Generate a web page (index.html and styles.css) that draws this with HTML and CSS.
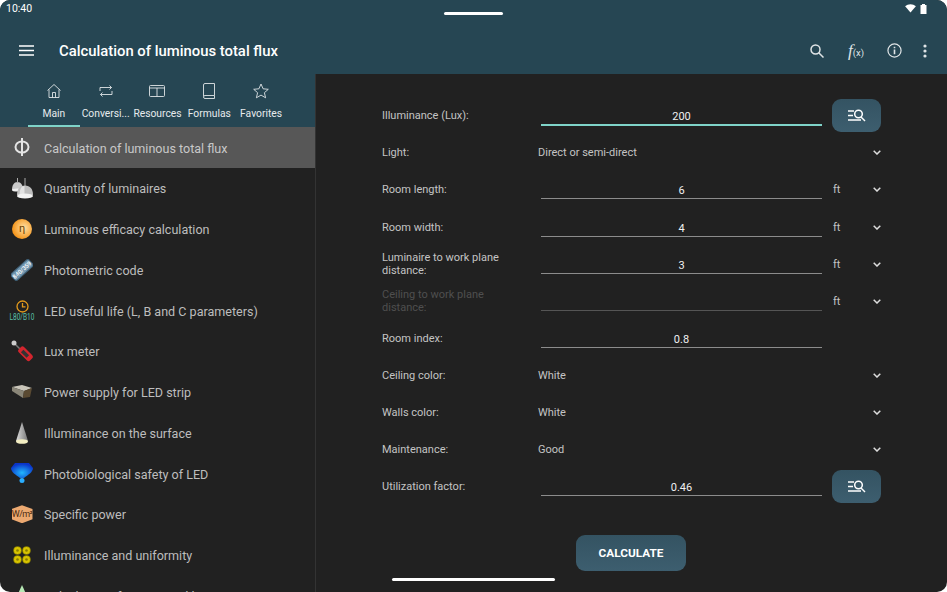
FILE: index.html
```html
<!DOCTYPE html>
<html lang="en">
<head>
  <meta charset="UTF-8">
  <title>Calculation of luminous total flux</title>
  <link rel="stylesheet" href="styles.css">
</head>
<body>
  <div class="screen">
    <!-- Status bar and toolbar -->
    <header class="appbar">
      <div class="status">
        <span>10:40</span>
        <span class="status-icons">
          <svg width="11" height="9" viewBox="0 0 12 10"><path d="M0 2.500C3.200-.6 8.800-.6 12 2.500L6 9.500z" fill="#fff"/></svg>
          <svg width="7" height="10" viewBox="0 0 7 10"><path d="M2 0h3v1h1.500v9H.5V1H2z" fill="#fff"/></svg>
        </span>
      </div>
      <div class="toolbar">
        <svg class="menu" width="15" height="11" viewBox="0 0 15 11"><path d="M0 1h15M0 5.500h15M0 10h15" stroke="#fff" stroke-width="1.400"/></svg>
        <h1>Calculation of luminous total flux</h1>
        <div class="actions">
          <svg class="act-search" width="14" height="14" viewBox="0 0 14 14" fill="none" stroke="#dfe4e6" stroke-width="1.500"><circle cx="5.500" cy="5.500" r="4.500"/><path d="M8.700 8.700l4.800 4.800"/></svg>
          <span class="fx"><i>f</i><small>(x)</small></span>
          <svg class="act-info" width="15" height="15" viewBox="0 0 16 16" fill="none" stroke="#dfe4e6" stroke-width="1.300"><circle cx="8" cy="8" r="7"/><path d="M8 7v5" stroke-width="1.700"/><path d="M8 4v1.700" stroke-width="1.700"/></svg>
          <svg class="act-more" width="4" height="14" viewBox="0 0 4 14" fill="#dfe4e6"><circle cx="2" cy="2" r="1.600"/><circle cx="2" cy="7" r="1.600"/><circle cx="2" cy="12" r="1.600"/></svg>
        </div>
      </div>
    </header>

    <div class="body">
      <aside class="sidebar">
        <nav class="tabs">
          <a class="tab active">
            <svg width="16" height="16" viewBox="0 0 16 16" fill="none" stroke="#dfe4e6" stroke-width=".9"><path d="M1.500 7.500L8 1.500l6.500 6M3 6.500v8h10v-8M6.500 14.500v-5h3v5"/></svg>
            <span>Main</span>
          </a>
          <a class="tab">
            <svg width="16" height="16" viewBox="0 0 16 16" fill="none" stroke="#dfe4e6" stroke-width=".9"><path d="M2 8V4.500h11.500M11.500 2.500l2 2-2 2M14 8v3.500H2.500M4.500 9.500l-2 2 2 2"/></svg>
            <span>Conversi...</span>
          </a>
          <a class="tab">
            <svg width="16" height="16" viewBox="0 0 16 16" fill="none" stroke="#dfe4e6" stroke-width=".9"><rect x="0.500" y="2.500" width="15" height="11" rx="1"/><path d="M8 5v8.500M0.500 5h15"/></svg>
            <span>Resources</span>
          </a>
          <a class="tab">
            <svg width="16" height="16" viewBox="0 0 16 16" fill="none" stroke="#dfe4e6" stroke-width=".9"><path d="M2.500 13V2a1.500 1.500 0 0 1 1.500-1.500h9.500v12H4a1.300 1.300 0 0 0 0 3h9.500v-3"/></svg>
            <span>Formulas</span>
          </a>
          <a class="tab">
            <svg width="16" height="16" viewBox="0 0 16 16" fill="none" stroke="#dfe4e6" stroke-width=".9"><path d="M8 1l2.100 4.800 5.200.5-3.900 3.400 1.200 5.100L8 12.100l-4.600 2.700 1.200-5.100L.7 6.300l5.200-.5z"/></svg>
            <span>Favorites</span>
          </a>
        </nav>
        <ul class="calc-list">
          <li class="selected">
            <span class="ico"><svg width="16" height="18" viewBox="0 0 16 18" fill="none" stroke="#e4e4e4" stroke-width="2"><ellipse cx="8" cy="9" rx="6.500" ry="5.500"/><path d="M8 0v18"/></svg></span>
            <span>Calculation of luminous total flux</span>
          </li>
          <li>
            <span class="ico"><svg width="22" height="21" viewBox="0 0 22 21"><path d="M1 12C1 7 3 4 6.500 4s5.500 3 5.500 8z" fill="#c9c9c9"/><ellipse cx="6.500" cy="12" rx="5.500" ry="1.500" fill="#eee"/><path d="M6 0h1v5H6zM13.500 0h1v8h-1z" fill="#aaa"/><path d="M6 17C6 11 9 7.500 14 7.500S22 11 22 17z" fill="#bdbdbd"/><path d="M11 8.500C9 11 8.500 14 8.500 17h5V8z" fill="#e2e2e2"/><ellipse cx="14" cy="18" rx="8" ry="2.500" fill="#f2f2f2"/></svg></span>
            <span>Quantity of luminaires</span>
          </li>
          <li>
            <span class="ico"><span class="eta">η</span></span>
            <span>Luminous efficacy calculation</span>
          </li>
          <li>
            <span class="ico"><svg width="22" height="22" viewBox="0 0 22 22"><rect x="-1" y="6.500" width="24" height="9" rx="2.500" transform="rotate(-42 11 11)" fill="#6f94ad" stroke="#3d5c72"/><text x="11" y="13" text-anchor="middle" transform="rotate(-42 11 11)" font-size="6" font-weight="700" fill="#f2f6f8">840/359</text></svg></span>
            <span>Photometric code</span>
          </li>
          <li>
            <span class="ico ico-led">
              <svg width="13" height="13" viewBox="0 0 13 13" fill="none" stroke="#e39a1c" stroke-width="1.300"><circle cx="6.500" cy="6.500" r="5.500"/><path d="M6.500 3v3.800h3"/></svg>
              <span>L80/B10</span>
            </span>
            <span>LED useful life (L, B and C parameters)</span>
          </li>
          <li>
            <span class="ico"><svg width="22" height="22" viewBox="0 0 22 22"><path d="M3 3l6 6" stroke="#777" stroke-width="1.500"/><circle cx="3" cy="3" r="2.500" fill="#ccc"/><rect x="6.500" y="10" width="16" height="7.500" rx="2.500" transform="rotate(45 14.500 13.750)" fill="#d3252e"/><rect x="10" y="12" width="8" height="3.500" transform="rotate(45 14 13.750)" fill="#333"/></svg></span>
            <span>Lux meter</span>
          </li>
          <li>
            <span class="ico"><svg width="20" height="13" viewBox="0 0 20 13"><path d="M0 2L10 0l10 3-8 3z" fill="#c9c5b9"/><path d="M0 2l12 4-1 7L0 6z" fill="#8a8678"/><path d="M12 6l8-3-2 9-7 1z" fill="#5a4a32"/></svg></span>
            <span>Power supply for LED strip</span>
          </li>
          <li>
            <span class="ico"><svg width="14" height="22" viewBox="0 0 14 22"><defs><linearGradient id="cone" x1="0" x2="1" y1="0" y2="0"><stop offset="0" stop-color="#ddd"/><stop offset="1" stop-color="#777"/></linearGradient></defs><path d="M7 0L13 19H1z" fill="url(#cone)"/><ellipse cx="7" cy="19.500" rx="6" ry="2.300" fill="#f3eec2"/></svg></span>
            <span>Illuminance on the surface</span>
          </li>
          <li>
            <span class="ico"><svg width="22" height="20" viewBox="0 0 22 20"><defs><radialGradient id="blue" cx=".5" cy=".65" r=".6"><stop offset="0" stop-color="#21b8ff"/><stop offset="1" stop-color="#0a34c8"/></radialGradient></defs><path d="M4 0h14l4 5c0 4-5 7-9 10H9C5 12 0 9 0 5z" fill="url(#blue)"/><circle cx="11" cy="17.500" r="2.500" fill="#2aaeff"/></svg></span>
            <span>Photobiological safety of LED</span>
          </li>
          <li>
            <span class="ico"><span class="wm">W/m²</span></span>
            <span>Specific power</span>
          </li>
          <li>
            <span class="ico"><svg width="18" height="18" viewBox="0 0 18 18" fill="#d8c400" stroke="#6b6200" stroke-width=".5"><circle cx="4.500" cy="4.500" r="4"/><circle cx="13.500" cy="4.500" r="4"/><circle cx="4.500" cy="13.500" r="4"/><circle cx="13.500" cy="13.500" r="4"/><g fill="#8d8000" stroke="none"><circle cx="4.500" cy="4.500" r="1.300"/><circle cx="13.500" cy="4.500" r="1.300"/><circle cx="4.500" cy="13.500" r="1.300"/><circle cx="13.500" cy="13.500" r="1.300"/></g></svg></span>
            <span>Illuminance and uniformity</span>
          </li>
          <li>
            <span class="ico"><svg width="22" height="22" viewBox="0 0 22 22"><path d="M11 0l9 20H2z" fill="#b6e8b4"/></svg></span>
            <span>Calculation of spaces and luminaires</span>
          </li>
        </ul>
      </aside>

      <main class="content">
        <form class="calc-form">
          <label>Illuminance (Lux):</label>
          <div class="input focus">200</div>
          <button type="button" class="list-btn"><svg width="18" height="13" viewBox="0 0 18 13" fill="none" stroke="#fff" stroke-width="1.500"><path d="M0 2h6M0 6.500h5M0 11h13"/><circle cx="10.500" cy="5" r="3.800"/><path d="M13 8l4 4"/></svg></button>

          <label>Light:</label>
          <div class="select">Direct or semi-direct<svg class="chev" width="8" height="5" viewBox="0 0 8 5" fill="none" stroke="#ddd" stroke-width="1.500"><path d="M.7.7L4 4l3.300-3.300"/></svg></div>

          <label>Room length:</label>
          <div class="input">6</div>
          <div class="unit">ft<svg class="chev" width="8" height="5" viewBox="0 0 8 5" fill="none" stroke="#ddd" stroke-width="1.500"><path d="M.7.7L4 4l3.300-3.300"/></svg></div>

          <label>Room width:</label>
          <div class="input">4</div>
          <div class="unit">ft<svg class="chev" width="8" height="5" viewBox="0 0 8 5" fill="none" stroke="#ddd" stroke-width="1.500"><path d="M.7.7L4 4l3.300-3.300"/></svg></div>

          <label>Luminaire to work plane distance:</label>
          <div class="input">3</div>
          <div class="unit">ft<svg class="chev" width="8" height="5" viewBox="0 0 8 5" fill="none" stroke="#ddd" stroke-width="1.500"><path d="M.7.7L4 4l3.300-3.300"/></svg></div>

          <label class="off">Ceiling to work plane distance:</label>
          <div class="input off"></div>
          <div class="unit">ft<svg class="chev" width="8" height="5" viewBox="0 0 8 5" fill="none" stroke="#ddd" stroke-width="1.500"><path d="M.7.7L4 4l3.300-3.300"/></svg></div>

          <label>Room index:</label>
          <div class="input">0.8</div>
          <span></span>

          <label>Ceiling color:</label>
          <div class="select">White<svg class="chev" width="8" height="5" viewBox="0 0 8 5" fill="none" stroke="#ddd" stroke-width="1.500"><path d="M.7.7L4 4l3.300-3.300"/></svg></div>

          <label>Walls color:</label>
          <div class="select">White<svg class="chev" width="8" height="5" viewBox="0 0 8 5" fill="none" stroke="#ddd" stroke-width="1.500"><path d="M.7.7L4 4l3.300-3.300"/></svg></div>

          <label>Maintenance:</label>
          <div class="select">Good<svg class="chev" width="8" height="5" viewBox="0 0 8 5" fill="none" stroke="#ddd" stroke-width="1.500"><path d="M.7.7L4 4l3.300-3.300"/></svg></div>

          <label>Utilization factor:</label>
          <div class="input">0.46</div>
          <button type="button" class="list-btn"><svg width="18" height="13" viewBox="0 0 18 13" fill="none" stroke="#fff" stroke-width="1.500"><path d="M0 2h6M0 6.500h5M0 11h13"/><circle cx="10.500" cy="5" r="3.800"/><path d="M13 8l4 4"/></svg></button>
        </form>
        <button type="button" class="calc-btn">CALCULATE</button>
      </main>
    </div>

    <!-- System gesture pills -->
    <div class="pill pill-top"></div>
    <div class="pill pill-bottom"></div>
  </div>
</body>
</html>
```

FILE: styles.css
```css
/* Tablet screen */
body {
  margin: 0;
  background: #fff;
}

.screen {
  position: relative;
  width: 947px;
  height: 592px;
  overflow: hidden;
  border-radius: 10px;
  background: #212121;
  font-family: Roboto, "Liberation Sans", sans-serif;
  color: #e0e0e0;
  display: flex;
  flex-direction: column;
}

/* Top bars */
.appbar {
  height: 74px;
  flex: none;
  background: #264653;
  color: #fff;
}

.status {
  height: 17px;
  padding: 0 20px 0 6px;
  display: flex;
  justify-content: space-between;
  align-items: center;
  font-size: 10.500px;
}

.status-icons {
  display: flex;
  gap: 4px;
  align-items: center;
}

.toolbar {
  height: 47px;
  display: flex;
  align-items: center;
  padding: 10px 20px 0 19px;
}

.toolbar h1 {
  margin: 0 0 0 25px;
  font-size: 14.850px;
  font-weight: 500;
  flex: 1;
}

.actions {
  display: flex;
  align-items: center;
}

.act-search { margin-right: 24px; }
.act-info { margin-right: 21px; }

.fx {
  width: 17px;
  margin-right: 22px;
  color: #dfe4e6;
  font-family: "Liberation Serif", serif;
  font-size: 17px;
  white-space: nowrap;
}

.fx small {
  font-family: Roboto, sans-serif;
  font-size: 9.500px;
}

/* Sidebar */
.body {
  flex: 1;
  min-height: 0;
  display: flex;
}

.sidebar {
  width: 315px;
  flex: none;
  border-right: 1px solid #333;
  display: flex;
  flex-direction: column;
}

.tabs {
  height: 53px;
  flex: none;
  padding-left: 28px;
  padding-right: 28px;
  background: #264653;
  display: flex;
  justify-content: space-between;
}

.tab {
  width: 52px;
  box-sizing: border-box;
  padding-top: 9px;
  display: flex;
  flex-direction: column;
  align-items: center;
  gap: 8px;
  font-size: 10.300px;
  white-space: nowrap;
  color: #e6ebed;
  border-bottom: 2px solid transparent;
}

.tab.active {
  border-bottom-color: #7fd3c8;
}

.calc-list {
  margin: 0;
  padding: 0;
  list-style: none;
}

.calc-list li {
  height: 40.750px;
  display: flex;
  align-items: center;
  font-size: 12.550px;
  color: #bdbdbd;
  white-space: nowrap;
}

.calc-list li > span:last-child {
  padding-top: 1.500px;
}

.calc-list li.selected {
  background: #575757;
  color: #c8c8c8;
}

.ico {
  width: 44px;
  flex: none;
  display: flex;
  flex-direction: column;
  align-items: center;
  justify-content: center;
}

.eta {
  width: 20px;
  height: 20px;
  border-radius: 50%;
  background: radial-gradient(circle at 60% 45%, #ffe2a8, #f5961c 70%);
  color: #6b4300;
  font-size: 11px;
  line-height: 20px;
  text-align: center;
}

.ico-led span {
  font-size: 6.500px;
  line-height: 8px;
  color: #5cc0a8;
  transform: scaleY(1.3);
}

.wm {
  width: 21px;
  height: 18px;
  background: #eca971;
  color: #4a2a10;
  font-size: 9px;
  letter-spacing: -.6px;
  line-height: 18px;
  text-align: center;
  clip-path: polygon(50% 0, 100% 22%, 100% 78%, 50% 100%, 0 78%, 0 22%);
}

/* Form */
.content {
  flex: 1;
  padding: 23.200px 66px 0;
  display: flex;
  flex-direction: column;
  align-items: center;
}

.calc-form {
  width: 100%;
  display: grid;
  grid-template-columns: 156px 295px 48px;
  grid-auto-rows: 37.100px;
  align-items: center;
  font-size: 11px;
}

.calc-form label {
  line-height: 13px;
  color: #c4c4c4;
  padding-right: 8px;
}

.calc-form label.off {
  color: #4f4f4f;
}

.input {
  width: 281px;
  margin-left: 3px;
  height: 18px;
  line-height: 21px;
  text-align: center;
  color: #f0f0f0;
  border-bottom: 1.500px solid #8c8c8c;
}

.input.focus {
  border-bottom: 2px solid #7fd3c8;
}

.input.off {
  border-bottom-color: #555;
}

.select {
  grid-column: 2 / 4;
  display: flex;
  justify-content: space-between;
  align-items: center;
  color: #c4c4c4;
}

.unit {
  display: flex;
  justify-content: space-between;
  align-items: center;
  color: #c4c4c4;
}

.list-btn {
  width: 49px;
  height: 33px;
  margin-left: -1px;
  padding: 0;
  border: 0;
  border-radius: 9px;
  background: linear-gradient(#345362, #3d5e6f);
  display: flex;
  align-items: center;
  justify-content: center;
}

.calc-btn {
  width: 110px;
  height: 36px;
  margin: 29.500px 1px 0 0;
  border: 0;
  border-radius: 9px;
  background: linear-gradient(#345362, #3d5e6f);
  color: #fff;
  font-family: Roboto, sans-serif;
  font-size: 11.800px;
  font-weight: 700;
}

/* System pills */
.pill {
  position: absolute;
  background: #fff;
  border-radius: 2px;
  height: 3px;
}

.pill-top {
  top: 12px;
  left: 444px;
  width: 59px;
}

.pill-bottom {
  top: 578px;
  left: 392px;
  width: 163px;
}
```
